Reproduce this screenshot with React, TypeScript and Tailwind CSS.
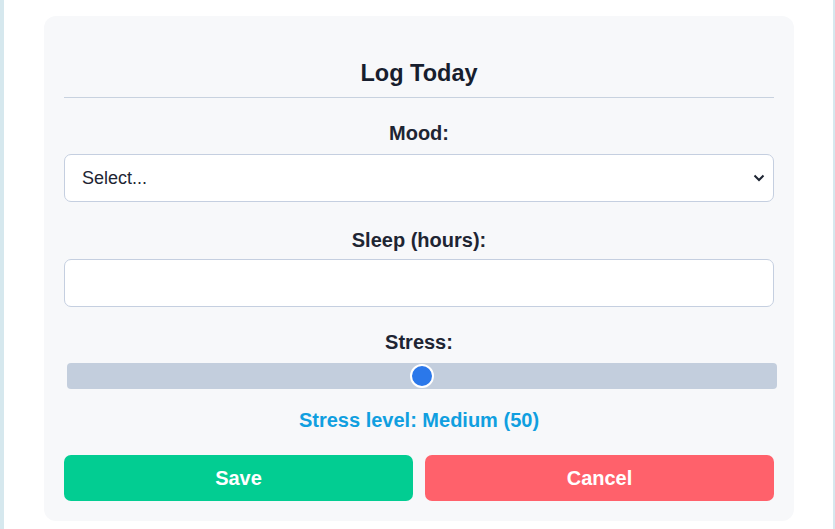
import React from 'react'

const font = { fontFamily: '"Liberation Sans", Arial, sans-serif' }

const App = () => {
  const stress = 50
  return (
    <div className="flex h-[529px] w-[835px] bg-white overflow-hidden" style={font}>
      <div className="w-[4px] h-full bg-[#d6e8ee]" />
      <div className="flex-1 pl-[40px] pt-[16px]">
        <div className="w-[750px] h-[505px] rounded-[12px] bg-[#f7f8fa] px-[20px] pt-[20px]">
          <h2 className="pt-[24px] pb-[11px] text-center text-[23.5px] leading-[26px] font-bold text-[#171e2e] border-b border-[#c8d2df]">
            Log Today
          </h2>

          <label className="block mt-[24px] text-center text-[20px] leading-[22px] font-bold text-[#1e2533]">
            Mood:
          </label>
          <div className="relative mt-[10px]">
            <select className="w-full h-[48px] appearance-none rounded-[7px] border border-[#c5cfe0] bg-white pl-[17px] text-[18px] text-[#1e2533] outline-none">
              <option>Select...</option>
            </select>
            <svg className="absolute right-[9px] top-[20px]" width="12" height="8" viewBox="0 0 12 8">
              <path d="M1.5 1.5 6 6l4.5-4.5" fill="none" stroke="#1e2533" strokeWidth="2" />
            </svg>
          </div>

          <label className="block mt-[27px] text-center text-[20px] leading-[22px] font-bold text-[#1e2533]">
            Sleep (hours):
          </label>
          <input
            type="text"
            className="block mt-[8px] w-full h-[48px] rounded-[7px] border border-[#c5cfe0] bg-white px-[17px] outline-none"
          />

          <label className="block mt-[24px] text-center text-[20px] leading-[22px] font-bold text-[#1e2533]">
            Stress:
          </label>
          <div className="relative mt-[10px] ml-[3px] mr-[-3px] h-[26px] rounded-[4px] bg-[#c3cedd]">
            <div
              className="absolute top-1/2 -translate-x-1/2 -translate-y-1/2 w-[24px] h-[24px] rounded-full border-2 border-white bg-[#2b78ea]"
              style={{ left: `${stress}%` }}
            />
          </div>

          <p className="mt-[20px] text-center text-[20px] leading-[22px] font-bold text-[#109fe0]">
            Stress level: Medium ({stress})
          </p>

          <div className="mt-[24px] grid grid-cols-2 gap-[12px]">
            <button className="h-[46px] rounded-[7px] bg-[#02cd92] text-white text-[20px] font-bold">Save</button>
            <button className="h-[46px] rounded-[7px] bg-[#ff616b] text-white text-[20px] font-bold">Cancel</button>
          </div>
        </div>
      </div>
      <div className="w-[2px] h-full bg-[#d6e8ee]" />
    </div>
  )
}

export default App
